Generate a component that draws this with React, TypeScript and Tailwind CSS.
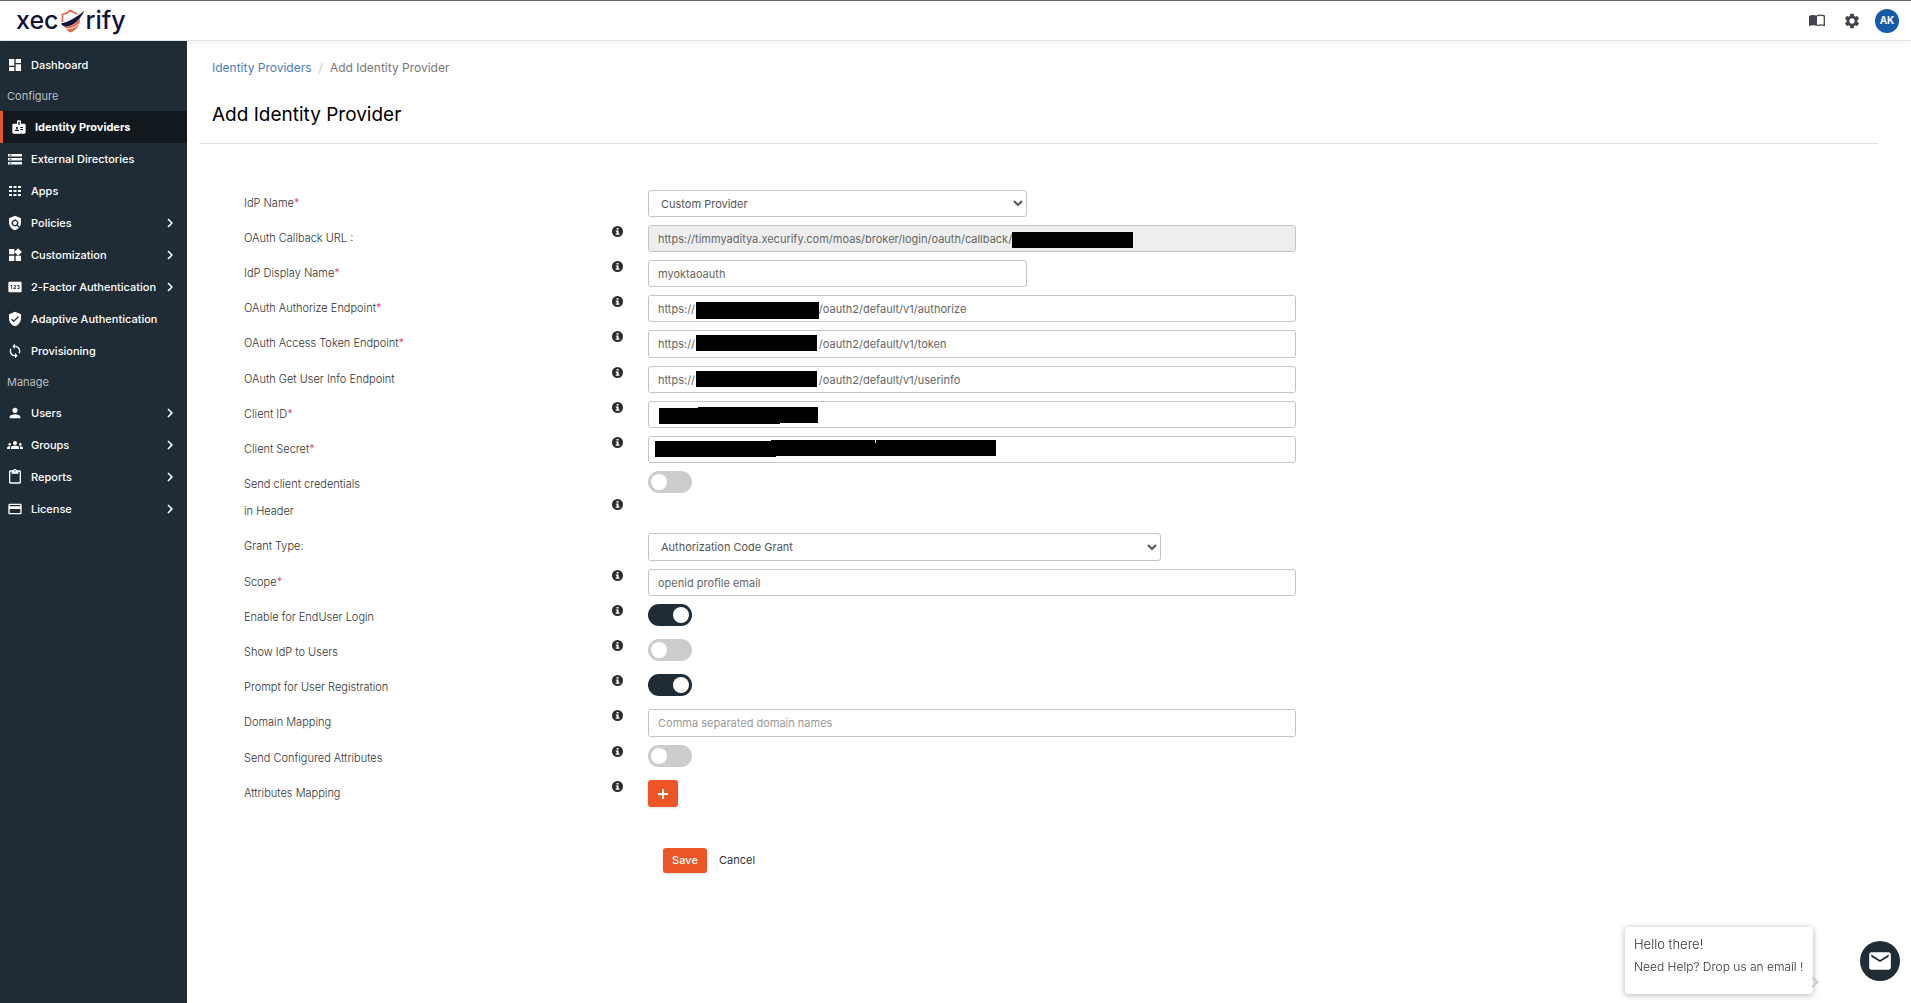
import { useState } from "react";
import type { ComponentType, ReactNode } from "react";
import {
  MdBadge,
  MdChevronRight,
  MdContentPaste,
  MdCreditCard,
  MdDashboard,
  MdEmail,
  MdGroups,
  MdLoop,
  MdPerson,
  MdPin,
  MdPolicy,
  MdSettings,
  MdVerifiedUser,
  MdWidgets,
} from "react-icons/md";

type NavIcon = ComponentType<{ size?: number; className?: string }>;
type NavEntry = { label: string; icon?: NavIcon; expandable?: boolean; active?: boolean };

function DirectoriesIcon({ size = 16, className }: { size?: number; className?: string }) {
  return (
    <svg width={size} height={size} viewBox="0 0 16 16" className={className} aria-hidden="true">
      <path d="M1 3h14v2.500H1zM1 7h14v2.500H1zM1 11h14v2.500H1z" fill="#fff" />
      <path d="M2.500 4.200h2M2.500 8.200h2M2.500 12.200h2" stroke="#1f2c35" strokeWidth="1" />
    </svg>
  );
}

function AppsIcon({ size = 16, className }: { size?: number; className?: string }) {
  return (
    <svg width={size} height={size} viewBox="0 0 16 16" className={className} aria-hidden="true">
      <path
        d="M2 3h3v2H2zM6.500 3h3v2h-3zM11 3h3v2h-3zM2 7h3v2H2zM6.500 7h3v2h-3zM11 7h3v2h-3zM2 11h3v2H2zM6.500 11h3v2h-3zM11 11h3v2h-3z"
        fill="#fff"
      />
    </svg>
  );
}

const NAV: NavEntry[] = [
  { label: "Dashboard", icon: MdDashboard },
  { label: "Configure" },
  { label: "Identity Providers", icon: MdBadge, active: true },
  { label: "External Directories", icon: DirectoriesIcon },
  { label: "Apps", icon: AppsIcon },
  { label: "Policies", icon: MdPolicy, expandable: true },
  { label: "Customization", icon: MdWidgets, expandable: true },
  { label: "2-Factor Authentication", icon: MdPin, expandable: true },
  { label: "Adaptive Authentication", icon: MdVerifiedUser },
  { label: "Provisioning", icon: MdLoop },
  { label: "Manage" },
  { label: "Users", icon: MdPerson, expandable: true },
  { label: "Groups", icon: MdGroups, expandable: true },
  { label: "Reports", icon: MdContentPaste, expandable: true },
  { label: "License", icon: MdCreditCard, expandable: true },
];

function Logo() {
  return (
    <a href="#" aria-label="xecurify" className="flex items-center text-[25px] leading-none font-medium text-[#12123a]">
      <span>xec</span>
      <svg viewBox="0 0 25 24" className="mx-px h-6 w-[25px]" aria-hidden="true">
        <path d="M2.500 13V5.500C5.500 5 8 3.500 10.500 1.500c2 1.500 4 2.700 7 3.400" fill="none" stroke="#e8684a" strokeWidth="1.700" />
        <path d="M4 17c6 1.500 11.500-1.500 16-8 .3 7-3 11.800-9.500 14.500C7.500 22 5.300 20 4 17z" fill="#e8684a" />
        <path d="M6 19.500c5 .8 9.500-1 13-5" fill="none" stroke="#fff" strokeWidth="1" />
        <path d="M1 14.500C8 13 16 9 24.500 1.500 20 11 13 17.500 6 17.500c-2.500 0-4-1-5-3z" fill="#12123a" />
      </svg>
      <span>rify</span>
    </a>
  );
}

function BookIcon() {
  return (
    <svg viewBox="0 0 16 13" className="h-[13px] w-4" aria-hidden="true">
      <path d="M0 1.700C2.400.7 5.600.7 8 1.700v10.300C5.600 11 2.400 11 0 12z" fill="#46434f" />
      <path d="M8 1.900c2.200-.9 5-.9 7.300 0v9.600c-2.300-.7-5.100-.7-7.300.2" fill="none" stroke="#46434f" strokeWidth="1.300" />
    </svg>
  );
}

function Header() {
  return (
    <header className="relative z-10 flex h-[41px] shrink-0 items-center justify-between border-t border-b border-t-[#6b666c] border-b-[#e2e4e6] bg-white pr-3 pl-4 shadow-[0_2px_10px_rgba(0,0,0,0.06)]">
      <Logo />
      <div className="flex items-center">
        <button type="button" aria-label="Documentation" className="mr-[18px]">
          <BookIcon />
        </button>
        <button type="button" aria-label="Settings" className="mr-[14px] text-[#46434f]">
          <MdSettings size={18} />
        </button>
        <button type="button" className="size-6 rounded-full bg-[#155ba8] text-[10px] font-bold text-white">
          AK
        </button>
      </div>
    </header>
  );
}

function Sidebar() {
  return (
    <nav className="w-[187px] shrink-0 bg-[#1f2c35] pt-2 text-[11px] text-white">
      {NAV.map(({ label, icon: Icon, expandable, active }) =>
        Icon ? (
          <a
            key={label}
            href="#"
            className={
              active
                ? "flex h-8 items-center border-l-[3px] border-[#e2582c] bg-[#11191f] pl-2 font-bold"
                : "flex h-8 items-center pl-[7px] font-medium"
            }
          >
            <Icon size={16} className="mr-2 shrink-0" />
            <span className="grow">{label}</span>
            {expandable && <MdChevronRight size={18} className="mr-2 shrink-0" />}
          </a>
        ) : (
          <div key={label} className="flex h-[30px] items-center pl-[7px] text-[#b9bec2]">
            {label}
          </div>
        ),
      )}
    </nav>
  );
}

function InfoIcon() {
  return (
    <svg viewBox="0 0 11 11" className="size-[11px]" role="img" aria-label="More information">
      <circle cx="5.500" cy="5.500" r="5.500" fill="#2b2b2b" />
      <path d="M4.600 2h2v1.500h-2zM3.800 4.500h2.800v3h.9v1.300H3.700V7.500h1V5.700h-.9z" fill="#fff" />
    </svg>
  );
}

type RowProps = {
  id?: string;
  label: ReactNode;
  required?: boolean;
  info?: boolean;
  tall?: boolean;
  children: ReactNode;
};

function Row({ id, label, required, info = true, tall, children }: RowProps) {
  return (
    <div className="grid grid-cols-[368fr_36fr_648fr_582fr] items-start">
      <label htmlFor={id} className="leading-[27px]">
        {label}
        {required && <span className="text-[#d6335c]">*</span>}
      </label>
      <div className={tall ? "pt-7" : "pt-px"}>{info && <InfoIcon />}</div>
      <div className="relative">{children}</div>
    </div>
  );
}

type FieldProps = {
  id: string;
  value?: string;
  placeholder?: string;
  readOnly?: boolean;
  narrow?: boolean;
  roomy?: boolean;
};

function Field({ id, value = "", placeholder, readOnly, narrow, roomy }: FieldProps) {
  return (
    <input
      id={id}
      type="text"
      defaultValue={value}
      placeholder={placeholder}
      readOnly={readOnly}
      className={`block rounded-[3px] border border-[#c4c4c4] px-[9px] font-normal text-[#666] placeholder:text-[#999] ${roomy ? "h-7" : "h-[27px]"} ${narrow ? "w-[379px] max-w-full" : "w-full"} ${readOnly ? "bg-[#eee]" : "bg-white"}`}
    />
  );
}

function Bar({ className }: { className: string }) {
  return <span className={`absolute bg-black ${className}`} />;
}

function Toggle({ id, on = false }: { id: string; on?: boolean }) {
  const [checked, setChecked] = useState(on);
  return (
    <span className="relative block h-[22px] w-11">
      <input
        id={id}
        type="checkbox"
        role="switch"
        checked={checked}
        onChange={(e) => setChecked(e.target.checked)}
        className="block h-[22px] w-11 cursor-pointer appearance-none rounded-full bg-[#ccc] checked:bg-[#1f2c35]"
      />
      <span
        className={`pointer-events-none absolute top-[3px] size-4 rounded-full bg-white ${checked ? "right-[3px]" : "left-[3px]"}`}
      />
    </span>
  );
}

const HIDDEN_HOST = "\u00a0".repeat(40);

function ProviderForm() {
  return (
    <form
      className="flex flex-col gap-2 pt-[46px] pl-[45px] text-[11px] font-light text-[#333]"
      onSubmit={(e) => e.preventDefault()}
    >
      <Row id="idp" label="IdP Name" required info={false}>
        <select
          id="idp"
          className="block h-[27px] w-[379px] max-w-full rounded-[3px] border border-[#c4c4c4] bg-white px-2 font-normal text-[#555]"
        >
          <option>Custom Provider</option>
        </select>
      </Row>
      <Row id="callback" label="OAuth Callback URL :">
        <Field id="callback" readOnly value="https://timmyaditya.xecurify.com/moas/broker/login/oauth/callback/" />
        <Bar className="top-[7px] left-[364px] h-4 w-[121px]" />
      </Row>
      <Row id="display" label="IdP Display Name" required>
        <Field id="display" narrow value="myoktaoauth" />
      </Row>
      <Row id="authorize" label="OAuth Authorize Endpoint" required>
        <Field id="authorize" value={`https://${HIDDEN_HOST}/oauth2/default/v1/authorize`} />
        <Bar className="top-[7px] left-12 h-[17px] w-[123px]" />
      </Row>
      <Row id="token" label="OAuth Access Token Endpoint" required>
        <Field id="token" roomy value={`https://${HIDDEN_HOST}/oauth2/default/v1/token`} />
        <Bar className="top-[5px] left-12 h-4 w-[121px]" />
      </Row>
      <Row id="userinfo" label="OAuth Get User Info Endpoint">
        <Field id="userinfo" value={`https://${HIDDEN_HOST}/oauth2/default/v1/userinfo`} />
        <Bar className="top-[5px] left-12 h-4 w-[121px]" />
      </Row>
      <Row id="client-id" label="Client ID" required>
        <Field id="client-id" />
        <Bar className="top-[7px] left-[11px] h-4 w-[121px]" />
        <Bar className="top-[6px] left-[50px] h-4 w-[120px]" />
      </Row>
      <Row id="secret" label="Client Secret" required>
        <Field id="secret" />
        <Bar className="top-[5px] left-[7px] h-4 w-[121px]" />
        <Bar className="top-1 left-[123px] h-4 w-[104px]" />
        <Bar className="top-[7px] left-[200px] h-[13px] w-[50px]" />
        <Bar className="top-1 left-[228px] h-4 w-[120px]" />
      </Row>
      <Row
        id="credentials"
        tall
        label={
          <>
            Send client credentials
            <br />
            in Header
          </>
        }
      >
        <Toggle id="credentials" />
      </Row>
      <Row id="grant" label="Grant Type:" info={false}>
        <select
          id="grant"
          className="block h-7 w-[513px] max-w-full rounded-[3px] border border-[#c4c4c4] bg-white px-2 font-normal text-[#555]"
        >
          <option>Authorization Code Grant</option>
        </select>
      </Row>
      <Row id="scope" label="Scope" required>
        <Field id="scope" value="openid profile email" />
      </Row>
      <Row id="enduser" label="Enable for EndUser Login">
        <Toggle id="enduser" on />
      </Row>
      <Row id="show" label="Show IdP to Users">
        <Toggle id="show" />
      </Row>
      <Row id="prompt" label="Prompt for User Registration">
        <Toggle id="prompt" on />
      </Row>
      <Row id="domains" label="Domain Mapping">
        <Field id="domains" roomy placeholder="Comma separated domain names" />
      </Row>
      <Row id="send-attrs" label="Send Configured Attributes">
        <Toggle id="send-attrs" />
      </Row>
      <Row id="add-attr" label="Attributes Mapping">
        <button
          id="add-attr"
          type="button"
          className="flex h-[27px] w-[30px] items-center justify-center rounded-[3px] bg-[#ec5526] shadow-sm"
        >
          <svg viewBox="0 0 10 10" className="size-[10px]" aria-hidden="true">
            <path d="M5 0v10M0 5h10" stroke="#fff" strokeWidth="2" />
          </svg>
        </button>
      </Row>
      <div className="mt-[33px] grid grid-cols-[404fr_1230fr]">
        <div className="col-start-2 flex items-center gap-3 pl-[15px]">
          <button type="submit" className="h-[25px] w-11 rounded-[3px] bg-[#ec5526] font-medium text-white shadow-sm">
            Save
          </button>
          <button type="button" className="font-normal">
            Cancel
          </button>
        </div>
      </div>
    </form>
  );
}

function ChatHelp() {
  return (
    <aside className="fixed right-[11px] bottom-[9px] flex items-center">
      <div className="relative mr-[47px] h-[67px] w-[188px] rounded-[4px] bg-white pt-2 pl-[9px] font-light text-[#333] shadow-[0_1px_6px_rgba(0,0,0,0.3)]">
        <p className="text-[13px] leading-[18px]">Hello there!</p>
        <p className="mt-[6px] text-xs leading-4 whitespace-nowrap">Need Help? Drop us an email !</p>
        <span className="absolute -right-1 bottom-[8px] size-2 rotate-45 border-t-2 border-r-2 border-[#ccc]" />
      </div>
      <button
        type="button"
        aria-label="Send an email"
        className="flex size-10 items-center justify-center rounded-full bg-[#1f2c35] text-white"
      >
        <MdEmail size={26} />
      </button>
    </aside>
  );
}

export default function App() {
  return (
    <div className="flex min-h-screen flex-col bg-white font-['Inter',sans-serif]">
      <Header />
      <div className="flex grow">
        <Sidebar />
        <main className="min-w-0 grow pr-[33px] pl-3">
          <nav aria-label="Breadcrumb" className="flex pt-4 pl-[13px] text-xs leading-[22px]">
            <a href="#" className="text-[#4a7ebf]">
              Identity Providers
            </a>
            <span className="mx-[7px] text-[#ccc]">/</span>
            <span className="text-[#777]">Add Identity Provider</span>
          </nav>
          <h1 className="border-b border-[#e2e2e2] pt-[23px] pb-[15px] pl-[13px] text-[19px] leading-[26px] text-black">
            Add Identity Provider
          </h1>
          <ProviderForm />
        </main>
      </div>
      <ChatHelp />
    </div>
  );
}
